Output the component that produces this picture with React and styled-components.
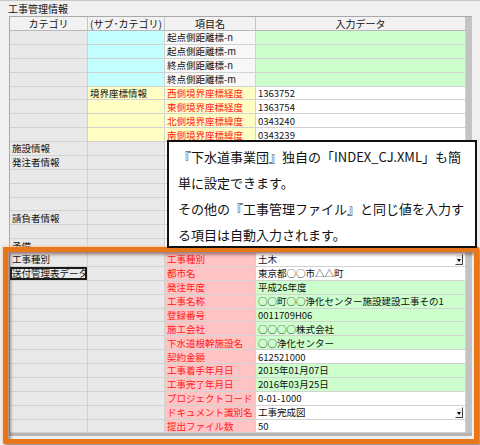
import styled, { createGlobalStyle } from 'styled-components';

const GlobalStyle = createGlobalStyle`
  html, body { margin: 0; padding: 0; }
  body {
    background: #f0f0f0;
    font-family: "Noto Sans CJK JP", "Noto Sans", sans-serif;
    color: #111;
  }
`;

const tones = {
  gray: '#e9e9e9',
  light: '#f8f8f8',
  cyan: '#c4ffff',
  yellow: '#ffffc4',
  green: '#ccffcc',
  white: '#ffffff',
  pink: '#ffc4c4',
};

// one entry per table row: category, sub category, item name, input data
const rows = [
  { sub: '', subBg: 'cyan', name: '起点側距離標-n', nameBg: 'light', value: '', valueBg: 'green' },
  { sub: '', subBg: 'cyan', name: '起点側距離標-m', nameBg: 'light', value: '', valueBg: 'green' },
  { sub: '', subBg: 'cyan', name: '終点側距離標-n', nameBg: 'light', value: '', valueBg: 'green' },
  { sub: '', subBg: 'cyan', name: '終点側距離標-m', nameBg: 'light', value: '', valueBg: 'green' },
  { sub: '境界座標情報', subBg: 'yellow', name: '西側境界座標経度', nameBg: 'yellow', red: true, value: '1363752', valueBg: 'white' },
  { sub: '', subBg: 'yellow', name: '東側境界座標経度', nameBg: 'yellow', red: true, value: '1363754', valueBg: 'white' },
  { sub: '', subBg: 'yellow', name: '北側境界座標緯度', nameBg: 'yellow', red: true, value: '0343240', valueBg: 'white' },
  { sub: '', subBg: 'yellow', name: '南側境界座標緯度', nameBg: 'yellow', red: true, value: '0343239', valueBg: 'white' },
  { cat: '施設情報' },
  { cat: '発注者情報' },
  {},
  {},
  {},
  { cat: '請負者情報' },
  {},
  { cat: '予備' },
  { cat: '工事種別', name: '工事種別', value: '土木', valueBg: 'white', drop: true },
  { cat: '送付管理表データ', focus: true, name: '都市名', value: '東京都○○市△△町', valueBg: 'white' },
  { name: '発注年度', value: '平成26年度', valueBg: 'green' },
  { name: '工事名称', value: '○○町○○浄化センター施設建設工事その1', valueBg: 'green' },
  { name: '登録番号', value: '0011709H06', valueBg: 'green' },
  { name: '施工会社', value: '○○○○株式会社', valueBg: 'green' },
  { name: '下水道根幹施設名', value: '○○浄化センター', valueBg: 'green' },
  { name: '契約金額', value: '612521000', valueBg: 'white' },
  { name: '工事着手年月日', value: '2015年01月07日', valueBg: 'green' },
  { name: '工事完了年月日', value: '2016年03月25日', valueBg: 'green' },
  { name: 'プロジェクトコード', value: '0-01-1000', valueBg: 'white' },
  { name: 'ドキュメント識別名', value: '工事完成図', valueBg: 'white', drop: true },
  { name: '提出ファイル数', value: '50', valueBg: 'white' },
].map((r, i) => (i >= 16 ? { nameBg: 'pink', red: true, ...r } : r));

export default function App() {
  return (
    <>
      <GlobalStyle />
      <Screen>
        <Title>工事管理情報</Title>
        <Sheet>
          <HeadCell>カテゴリ</HeadCell>
          <HeadCell>(サブ･カテゴリ)</HeadCell>
          <HeadCell>項目名</HeadCell>
          <HeadCell>入力データ</HeadCell>
          <ScrollTrack />
          {rows.map((r, i) => [
            <Cell key={`c${i}`} $bg="gray" $focus={r.focus}>{r.cat}</Cell>,
            <Cell key={`s${i}`} $bg={r.subBg || 'gray'}>{r.sub}</Cell>,
            <Cell key={`n${i}`} $bg={r.nameBg || 'light'} $red={r.red}>{r.name}</Cell>,
            <Cell key={`v${i}`} $bg={r.valueBg || 'white'}>
              {r.value}
              {r.drop && <DropButton />}
            </Cell>,
          ])}
        </Sheet>

        <Highlight />
        <Callout>
          <CalloutLine>『下水道事業団』独自の「INDEX_CJ.XML」も簡</CalloutLine>
          <CalloutLine>単に設定できます。</CalloutLine>
          <CalloutLine>その他の『工事管理ファイル』と同じ値を入力す</CalloutLine>
          <CalloutLine>る項目は自動入力されます。</CalloutLine>
        </Callout>
      </Screen>
    </>
  );
}

const Screen = styled.div`
  position: relative;
  width: 480px;
  height: 445px;
  overflow: hidden;
  box-sizing: border-box;
  border-top: 1px solid #c8c8c8;
  background: #f0f0f0;
`;

const Title = styled.div`
  height: 15px;
  padding-left: 8px;
  font-size: 10px;
  line-height: 15px;
`;

const Sheet = styled.div`
  display: grid;
  grid-template-columns: 78px 77px 91px 210px 6px;
  grid-template-rows: 14px repeat(29, 13.875px);
  width: max-content;
  margin-left: 9px;
  border-top: 1px solid #a9a9a9;
  border-left: 1px solid #a9a9a9;
  border-bottom: 3px solid #b4b4b4;
`;

const HeadCell = styled.div`
  display: flex;
  align-items: center;
  justify-content: center;
  box-sizing: border-box;
  background: #f2f2f2;
  border-right: 1px solid #c6c6c6;
  border-bottom: 1px solid #b8b8b8;
  font-size: 10px;
  line-height: 13px;
  white-space: nowrap;
`;

const ScrollTrack = styled.div`
  grid-column: 5;
  grid-row: 1 / span 30;
  background: #c3c3c3;
`;

const Cell = styled.div`
  display: flex;
  align-items: center;
  box-sizing: border-box;
  min-width: 0;
  padding: 0 0 0 2px;
  background: ${(p) => tones[p.$bg]};
  color: ${(p) => (p.$red ? '#ff1a1a' : '#111')};
  border-right: 1px solid #d2d2d2;
  border-bottom: 1px solid #d2d2d2;
  box-shadow: ${(p) => (p.$focus ? 'inset 0 0 0 2px #1a1a1a' : 'none')};
  font-size: 9.5px;
  line-height: 12px;
  white-space: nowrap;
`;

const DropButton = styled.span`
  position: relative;
  flex: none;
  width: 8px;
  height: 11px;
  margin: 0 2px 0 auto;
  box-sizing: border-box;
  background: #f0f0f0;
  border-top: 1px solid #ffffff;
  border-left: 1px solid #ffffff;
  border-right: 1px solid #404040;
  border-bottom: 1px solid #404040;

  &::after {
    content: '';
    position: absolute;
    left: 1px;
    top: 4px;
    border-left: 2.5px solid transparent;
    border-right: 2.5px solid transparent;
    border-top: 3px solid #000;
  }
`;

const Highlight = styled.div`
  position: absolute;
  left: 3px;
  top: 246px;
  width: 476px;
  height: 197px;
  box-sizing: border-box;
  border: 5px solid #e8761a;
  border-radius: 1px;
  box-shadow: 2px 2px 2px rgba(60, 40, 40, 0.45), inset 3px 3px 3px rgba(90, 40, 40, 0.45),
    -1px -1px 3px rgba(250, 190, 140, 0.6);
  pointer-events: none;
`;

const Callout = styled.div`
  position: absolute;
  left: 167px;
  top: 139px;
  width: 310px;
  height: 108px;
  box-sizing: border-box;
  padding: 2px 6px 0 9px;
  background: #ffffff;
  border: 2px solid #111;
  font-size: 13px;
  line-height: 26px;
  color: #111;
`;

const CalloutLine = styled.div`
  white-space: nowrap;
`;
